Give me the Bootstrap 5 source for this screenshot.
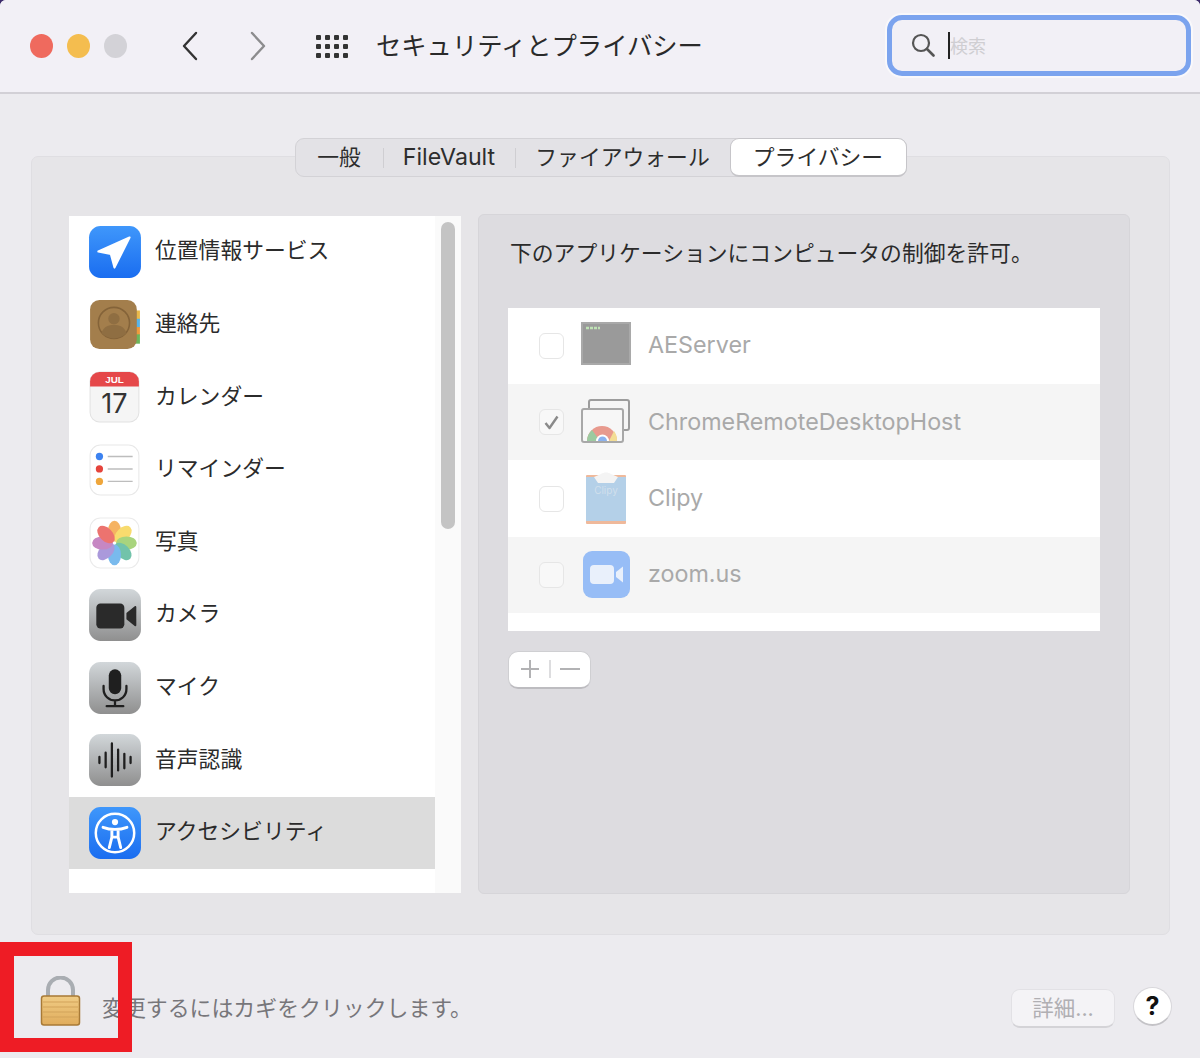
<!DOCTYPE html>
<html lang="ja">
<head>
  <meta charset="UTF-8" />
  <meta name="viewport" content="width=device-width, initial-scale=1.0" />
  <title>セキュリティとプライバシー</title>
  <link href="https://cdn.jsdelivr.net/npm/bootstrap@5.3.3/dist/css/bootstrap.min.css" rel="stylesheet">
  <style>
    html, body { height: 1058px; overflow: hidden; background: #3d2b6b; }
    body { font-family: "Inter", "Noto Sans CJK JP", sans-serif; color: #2b2b2b; }
    .fenster { height: 1058px; background: #ecebef; border-top-left-radius: 6px; border-top-right-radius: 6px; overflow: hidden; }

    /* title bar */
    .kopf { height: 94px; background: #f2f0f6; border-bottom: 2px solid #d2d0d6; padding-left: 30px; padding-right: 9px; }
    .ampel { width: 23px; height: 24px; border-radius: 50%; margin-right: 14px; }
    .ampel-rot { background: #ef6a5e; }
    .ampel-gelb { background: #f4bd4f; }
    .ampel-grau { background: #d3d2d7; }
    .pfeile { margin-left: 40px; gap: 50px; }
    .raster { margin-left: 49px; display: grid; grid-template-columns: repeat(4, 5px); gap: 4px 4px; }
    .raster i { width: 5px; height: 5px; background: #333; border-radius: 1px; display: block; }
    .fenstertitel { margin-left: 28px; font-size: 25.3px; line-height: 1; color: #2a2a2a; }
    .suche { width: 304px; height: 61px; margin-bottom: 2px; border: 5px solid #7ba3ee; border-radius: 15px; background: #f2f0f6; box-shadow: 0 0 0 2px #f9f8fb; padding-left: 19px; }
    .cursor { width: 2px; height: 27px; background: #222; margin-left: 13px; }
    .platzhalter { font-size: 18px; color: #cfced2; line-height: 1; margin-top: 3px; }

    /* grouped box and tabs */
    .gruppe { width: 1139px; height: 779px; margin: 62px 0 0 31px; background: #e6e5e8; border: 1px solid #dfdee2; border-radius: 7px; }
    .reiter { width: 612px; height: 39px; margin: -19px auto 0; background: #e3e2e6; border: 1px solid #d3d2d6; border-radius: 9px; font-size: 21.8px; }
    .reiter-eintrag { height: 100%; color: #2d2d2d; }
    .reiter-latein { font-size: 23.2px; }
    .trenner { border-right: 1px solid #cfced2; height: 20px; }
    .reiter-aktiv { height: 39px; margin: -1px -1px -1px 0; background: #fff; border: 1px solid #c6c5c9; border-bottom-width: 2px; border-radius: 9px; }

    .spalten { margin: 38px 0 0 37px; gap: 17px; }
    .liste-rahmen { width: 392px; height: 677px; margin-top: 1px; background: #fafafa; }
    .liste { width: 366px; background: #fff; }
    .zeile { height: 72.6px; padding-left: 19px; font-size: 21.8px; color: #2b2b2b; }
    .zeile svg { width: 54px; height: 54px; margin-right: 13px; flex: none; }
    .zeile span { margin-bottom: 3px; }
    .zeile-aktiv { background: #dcdcdc; }
    .leiste { width: 26px; padding: 6px 6px 0; }
    .griff { width: 14px; height: 307px; background: #c4c4c4; border-radius: 7px; }

    .rechts { width: 652px; height: 680px; margin-top: -1px; background: #dddce0; border: 1px solid #d6d5d9; border-radius: 6px; padding: 0 29px; }
    .rechts-titel { font-size: 21.8px; line-height: 1; margin: 28px 0 0 2px; color: #2b2b2b; white-space: nowrap; }
    .tabelle { width: 592px; height: 323px; margin-top: 43px; background: #fff; }
    .app { height: 76.3px; padding-left: 31px; font-size: 23.3px; color: #a9a9a9; }
    .app-ungerade { background: #f5f5f5; }
    .kiste { width: 25px; height: 26px; background: #fff; border: 1px solid #e6e6e6; border-radius: 6px; flex: none; }
    .app-ungerade .kiste { background: #f8f8f8; }
    .app svg.bild { width: 54px; height: 54px; margin: 0 15px 0 15px; flex: none; }
    .plusminus { width: 83px; height: 38px; margin-top: 20px; background: #fff; border: 1px solid #cfcfd2; border-bottom: 2px solid #bdbcc0; border-radius: 10px; }

    /* footer */
    .fuss { height: 123px; position: relative; padding-left: 39px; padding-right: 28px; }
    .schloss { width: 44px; height: 52px; margin-top: 41px; }
    .hinweis { font-size: 21.9px; line-height: 1; color: #77767a; margin: 63px 0 0 19px; }
    .details { width: 104px; height: 39px; margin-top: 54px; background: #f4f3f6; border: 1px solid #e2e1e5; border-bottom: 2px solid #d4d3d7; border-radius: 9px; color: #b0afb3; font-size: 21.5px; }
    .hilfe { width: 39px; height: 39px; margin: 52px 0 0 18px; background: #fff; border: 1px solid #d8d7db; border-bottom: 2px solid #c4c3c7; border-radius: 50%; font-size: 25px; font-weight: 700; color: #111; line-height: 1; }
    .rotrahmen { position: absolute; left: 0; top: 7px; width: 132px; height: 110px; border: 14px solid #ee1c25; }
  </style>
</head>
<body>
<div class="fenster d-flex flex-column">

  <!-- title bar -->
  <div class="kopf d-flex align-items-center flex-shrink-0">
    <span class="ampel ampel-rot"></span>
    <span class="ampel ampel-gelb"></span>
    <span class="ampel ampel-grau"></span>
    <div class="pfeile d-flex align-items-center">
      <svg width="18" height="30" viewBox="0 0 18 30"><path d="M15 2 3 15l12 13" fill="none" stroke="#333" stroke-width="2.4" stroke-linecap="round" stroke-linejoin="round"/></svg>
      <svg width="18" height="30" viewBox="0 0 18 30"><path d="M3 2l12 13L3 28" fill="none" stroke="#8c8c8e" stroke-width="2.4" stroke-linecap="round" stroke-linejoin="round"/></svg>
    </div>
    <div class="raster">
      <i></i><i></i><i></i><i></i><i></i><i></i><i></i><i></i><i></i><i></i><i></i><i></i>
    </div>
    <div class="fenstertitel">セキュリティとプライバシー</div>
    <div class="suche d-flex align-items-center ms-auto">
      <svg width="24" height="24" viewBox="0 0 24 24"><circle cx="10" cy="10" r="8" fill="none" stroke="#555" stroke-width="2.2"/><path d="M16 16l6.500 6.500" stroke="#555" stroke-width="2.600" stroke-linecap="round"/></svg>
      <span class="cursor"></span>
      <span class="platzhalter">検索</span>
    </div>
  </div>

  <!-- grouped box -->
  <div class="gruppe flex-shrink-0">
    <div class="reiter d-flex align-items-center">
      <div class="reiter-eintrag d-flex align-items-center justify-content-center" style="width:87px"><span>一般</span></div>
      <span class="trenner"></span>
      <div class="reiter-eintrag reiter-latein d-flex align-items-center justify-content-center" style="width:131px"><span>FileVault</span></div>
      <span class="trenner"></span>
      <div class="reiter-eintrag d-flex align-items-center justify-content-center" style="width:214px"><span>ファイアウォール</span></div>
      <div class="reiter-aktiv reiter-eintrag d-flex align-items-center justify-content-center flex-grow-1"><span>プライバシー</span></div>
    </div>

    <div class="spalten d-flex">
      <!-- service list -->
      <div class="liste-rahmen d-flex">
        <div class="liste">
          <div class="zeile d-flex align-items-center">
            <svg viewBox="0 0 52 52"><defs><linearGradient id="blau" x1="0" y1="0" x2="0" y2="1"><stop offset="0" stop-color="#3f97fb"/><stop offset="1" stop-color="#1a6df0"/></linearGradient></defs><rect x="1" y="1" width="50" height="50" rx="11" fill="url(#blau)"/><path d="M40 12 10 25.500l12 2.500 3.500 13z" fill="#fff" stroke="#fff" stroke-width="2" stroke-linejoin="round"/></svg>
            <span>位置情報サービス</span>
          </div>
          <div class="zeile d-flex align-items-center">
            <svg viewBox="0 0 52 52"><rect x="44" y="12" width="6" height="10" fill="#e9b84a"/><rect x="44" y="20" width="6" height="9" fill="#58b4e8"/><rect x="44" y="28" width="6" height="8" fill="#ef9a3c"/><rect x="44" y="35" width="6" height="9" fill="#6db65a"/><rect x="2" y="2" width="45" height="47" rx="9" fill="#a37e4c"/><circle cx="25" cy="24" r="15" fill="none" stroke="#846339" stroke-width="1.500"/><circle cx="25" cy="20" r="5.500" fill="#8f6e42"/><path d="M13 34c2-7 7-8 12-8s10 1 12 8c-3 3-8 5-12 5s-9-2-12-5z" fill="#8f6e42"/></svg>
            <span>連絡先</span>
          </div>
          <div class="zeile d-flex align-items-center">
            <svg viewBox="0 0 52 52"><rect x="2" y="2" width="47" height="48" rx="9" fill="#f5f5f5" stroke="#e2e2e2"/><path d="M2 16V11a9 9 0 0 1 9-9h29a9 9 0 0 1 9 9v5z" fill="#e5484a"/><text x="25.500" y="12.500" text-anchor="middle" font-family="Liberation Sans, sans-serif" font-size="9.500" font-weight="700" fill="#fff">JUL</text><text x="25.500" y="41" text-anchor="middle" font-family="Inter, sans-serif" font-size="26" fill="#333">17</text></svg>
            <span>カレンダー</span>
          </div>
          <div class="zeile d-flex align-items-center">
            <svg viewBox="0 0 52 52"><rect x="2" y="2" width="47" height="48" rx="10" fill="#fff" stroke="#e8e8e8"/><circle cx="11" cy="13" r="3.500" fill="#3c82f0"/><circle cx="11" cy="25" r="3.500" fill="#e5443c"/><circle cx="11" cy="37" r="3.500" fill="#efa63b"/><path d="M19 13h24M19 25h24M19 37h24" stroke="#bdbdbd" stroke-width="1.300"/></svg>
            <span>リマインダー</span>
          </div>
          <div class="zeile d-flex align-items-center">
            <svg viewBox="0 0 52 52"><rect x="2" y="2" width="47" height="48" rx="10" fill="#fff" stroke="#ebebeb"/>
              <g opacity=".75">
                <ellipse cx="25.500" cy="14.500" rx="6.300" ry="10" fill="#f29a2e"/>
                <ellipse cx="25.500" cy="14.500" rx="6.300" ry="10" fill="#f6cf3e" transform="rotate(45 25.500 26)"/>
                <ellipse cx="25.500" cy="14.500" rx="6.300" ry="10" fill="#8cc652" transform="rotate(90 25.500 26)"/>
                <ellipse cx="25.500" cy="14.500" rx="6.300" ry="10" fill="#44b08e" transform="rotate(135 25.500 26)"/>
                <ellipse cx="25.500" cy="14.500" rx="6.300" ry="10" fill="#4da3e8" transform="rotate(180 25.500 26)"/>
                <ellipse cx="25.500" cy="14.500" rx="6.300" ry="10" fill="#8e78cf" transform="rotate(225 25.500 26)"/>
                <ellipse cx="25.500" cy="14.500" rx="6.300" ry="10" fill="#b45fb0" transform="rotate(270 25.500 26)"/>
                <ellipse cx="25.500" cy="14.500" rx="6.300" ry="10" fill="#e6453f" transform="rotate(315 25.500 26)"/>
              </g></svg>
            <span>写真</span>
          </div>
          <div class="zeile d-flex align-items-center">
            <svg viewBox="0 0 52 52"><defs><linearGradient id="grau" x1="0" y1="0" x2="0" y2="1"><stop offset="0" stop-color="#d2d7da"/><stop offset="1" stop-color="#8f8f8f"/></linearGradient></defs><rect x="1" y="1" width="50" height="50" rx="11" fill="url(#grau)"/><rect x="8" y="15" width="27" height="24" rx="4" fill="#2a2a2a"/><path d="M37 24l8-6.500c.8-.6 1.500-.2 1.500.7v17.600c0 .9-.7 1.300-1.500.7l-8-6.500z" fill="#2a2a2a"/></svg>
            <span>カメラ</span>
          </div>
          <div class="zeile d-flex align-items-center">
            <svg viewBox="0 0 52 52"><rect x="1" y="1" width="50" height="50" rx="11" fill="url(#grau)"/><rect x="20" y="8" width="12" height="24" rx="6" fill="#1f1f1f"/><path d="M15 24v3c0 6.500 5 11 11 11s11-4.500 11-11v-3M26 38v5M18 43.500h16" fill="none" stroke="#1f1f1f" stroke-width="2.200" stroke-linecap="round"/></svg>
            <span>マイク</span>
          </div>
          <div class="zeile d-flex align-items-center">
            <svg viewBox="0 0 52 52"><rect x="1" y="1" width="50" height="50" rx="11" fill="url(#grau)"/><path d="M11 23v6M17 19v14M23 10v32M29 16v20M35 20v14M41 23v6" stroke="#1f1f1f" stroke-width="2.200" stroke-linecap="round"/></svg>
            <span>音声認識</span>
          </div>
          <div class="zeile zeile-aktiv d-flex align-items-center">
            <svg viewBox="0 0 52 52"><rect x="1" y="1" width="50" height="50" rx="11" fill="url(#blau)"/><circle cx="26" cy="26" r="18.500" fill="none" stroke="#fff" stroke-width="2.400"/><circle cx="26" cy="15.500" r="3" fill="#fff"/><path d="M14.500 20.500c4 1.500 7.500 2 11.500 2s7.500-.5 11.500-2M23 23v7l-2.500 10M29 23v7l2.500 10M23 30h6" fill="none" stroke="#fff" stroke-width="2.800" stroke-linecap="round"/></svg>
            <span>アクセシビリティ</span>
          </div>
        </div>
        <div class="leiste"><div class="griff"></div></div>
      </div>

      <!-- right panel -->
      <div class="rechts">
        <div class="rechts-titel">下のアプリケーションにコンピュータの制御を許可。</div>
        <div class="tabelle">
          <div class="app d-flex align-items-center">
            <span class="kiste"></span>
            <svg class="bild" viewBox="0 0 54 54"><rect x="3" y="4" width="48" height="41" fill="#9a9a9a" stroke="#a9a9a9" stroke-width="2"/><path d="M7 9h14" stroke="#bfe3b5" stroke-width="2.500" stroke-dasharray="3 1"/></svg>
            AEServer
          </div>
          <div class="app app-ungerade d-flex align-items-center">
            <span class="kiste d-flex align-items-center justify-content-center"><svg width="17" height="17" viewBox="0 0 17 17"><path d="M2.500 9l4 5L14.500 2.500" fill="none" stroke="#8a8a8a" stroke-width="2.400" stroke-linejoin="round"/></svg></span>
            <svg class="bild" viewBox="0 0 54 54"><rect x="10" y="5" width="40" height="30" rx="2" fill="#f5f5f5" stroke="#9c9c9c" stroke-width="2"/><rect x="3" y="14" width="41" height="33" rx="2" fill="#f7f7f7" stroke="#a8a8a8" stroke-width="2"/><path d="M8 46a15 15 0 0 1 30 0z" fill="#e89a8e"/><path d="M8 46a15 15 0 0 1 5-11l8 11z" fill="#9ccaa0"/><path d="M35 36a15 15 0 0 1 3 10H30z" fill="#f3dd95"/><path d="M17 46a6.500 6.500 0 0 1 13 0z" fill="#fff"/><path d="M19 46a4.500 4.500 0 0 1 9 0z" fill="#8cb2ee"/></svg>
            ChromeRemoteDesktopHost
          </div>
          <div class="app d-flex align-items-center">
            <span class="kiste"></span>
            <svg class="bild" viewBox="0 0 54 54"><rect x="7" y="3" width="40" height="49" rx="1" fill="#efb99b"/><rect x="7" y="5" width="40" height="44" fill="#b4d0e8"/><path d="M15 5l7-3c3-2 7-2 10 0l7 3-4 6H19z" fill="#f4f4f4"/><text x="27" y="22" text-anchor="middle" font-family="Inter, sans-serif" font-size="10" fill="#d0dfec">Clipy</text></svg>
            Clipy
          </div>
          <div class="app app-ungerade d-flex align-items-center">
            <span class="kiste"></span>
            <svg class="bild" viewBox="0 0 54 54"><rect x="4" y="3" width="47" height="47" rx="9" fill="#97bdf6"/><rect x="11" y="17" width="24" height="19" rx="4" fill="#e9f0fb"/><path d="M37 24l7-5.500v16L37 29z" fill="#e9f0fb"/></svg>
            zoom.us
          </div>
        </div>
        <div class="plusminus d-flex align-items-center justify-content-center gap-2">
          <svg width="22" height="22" viewBox="0 0 22 22"><path d="M11 2v18M2 11h18" stroke="#b2b2b4" stroke-width="2"/></svg>
          <svg width="2" height="18" viewBox="0 0 2 18"><path d="M1 0v18" stroke="#d2d2d4" stroke-width="1.500"/></svg>
          <svg width="22" height="22" viewBox="0 0 22 22"><path d="M1 11h20" stroke="#b2b2b4" stroke-width="2"/></svg>
        </div>
      </div>
    </div>
  </div>

  <!-- footer -->
  <div class="fuss d-flex align-items-start flex-shrink-0">
    <svg class="schloss" viewBox="0 0 44 52">
      <defs><linearGradient id="gold" x1="0" y1="0" x2="0" y2="1"><stop offset="0" stop-color="#f0cc85"/><stop offset="1" stop-color="#e0ac5c"/></linearGradient></defs>
      <path d="M9 22V14a12.500 12.500 0 0 1 25 0v8" fill="none" stroke="#a9adb2" stroke-width="4"/>
      <rect x="2.500" y="20" width="38" height="29" rx="2.500" fill="url(#gold)" stroke="#a87a36" stroke-width="1.500"/>
      <path d="M4 26h35M4 31h35M4 36h35M4 41h35" stroke="#d2a35a" stroke-width="1"/>
    </svg>
    <span class="hinweis">変更するにはカギをクリックします。</span>
    <button type="button" class="details d-flex align-items-center justify-content-center ms-auto">詳細...</button>
    <div class="hilfe d-flex align-items-center justify-content-center">?</div>
    <div class="rotrahmen"></div>
  </div>
</div>
<script src="https://cdn.jsdelivr.net/npm/bootstrap@5.3.3/dist/js/bootstrap.bundle.min.js"></script>
</body>
</html>
